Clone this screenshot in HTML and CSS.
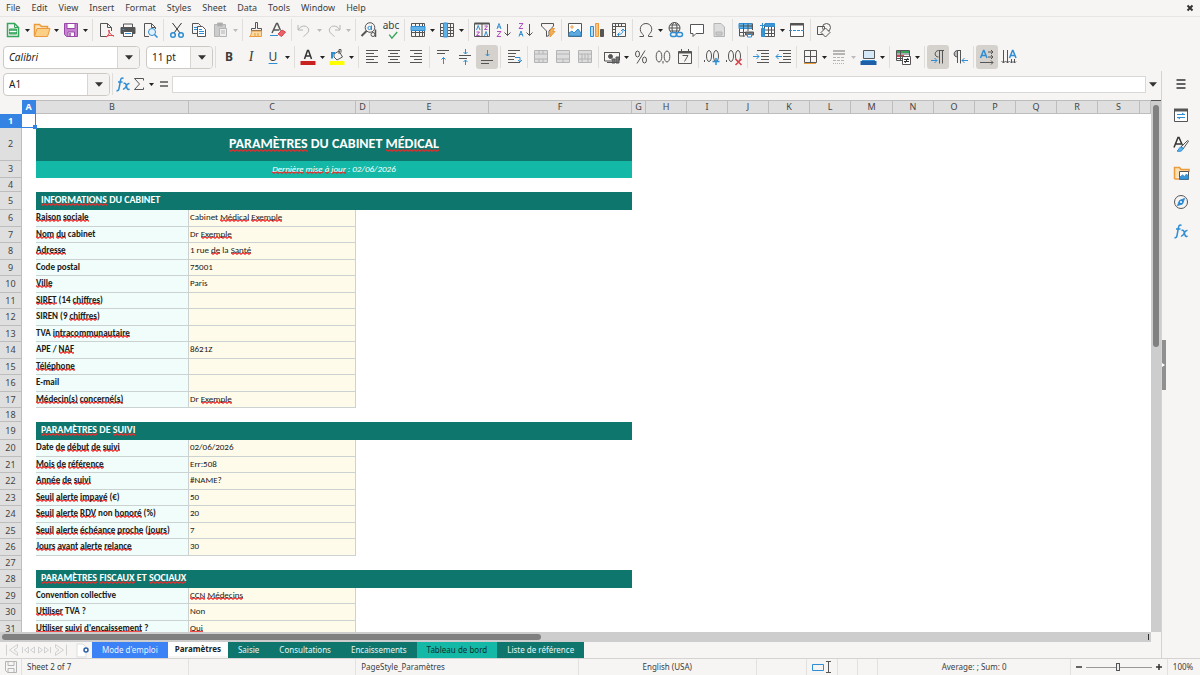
FILE: index.html
```html
<!DOCTYPE html>
<html lang="fr">
<head>
<meta charset="utf-8">
<meta name="viewport" content="width=device-width, initial-scale=1">
<title>Paramètres du cabinet médical</title>
<link rel="stylesheet" href="styles.css">
</head>
<body>
<svg class="defs" aria-hidden="true">
  <symbol id="arrow" viewBox="0 0 7 4"><path d="M0 0h7L3.500 4z" fill="currentColor"/></symbol>
  <symbol id="fx" viewBox="0 0 18 18"><path d="M9.500 3.500c-1.800-1-2.700 0-3 2L5 13.500c-.4 2-1.200 2.500-2.500 2M4 7h4.500M9.500 8.500c2-.8 2.300 0 3 3s1.200 3.500 3 2.500M15.500 8.500c-2-.5-2.500 1-3.500 3s-1.500 3-3 2.500" class="b w15"/></symbol>
</svg>

<nav class="menubar">
  <button>File</button><button>Edit</button><button>View</button><button>Insert</button><button>Format</button><button>Styles</button><button>Sheet</button><button>Data</button><button>Tools</button><button>Window</button><button>Help</button>
  <button class="close" aria-label="Close"><svg class="i s8" viewBox="0 0 8 8"><path d="M1.500 1.500l5 5m0-5l-5 5" class="k w2"/></svg></button>
</nav>

<div class="toolbar">
  <button aria-label="New"><svg class="i" viewBox="0 0 18 18"><path d="M3.500 2.500h7l4 4v9h-11z" class="g w15"/><path d="M10.500 2.500v4h4" class="g"/><path d="M5.500 8h7v5h-7z" fill="#5cb878" class="g"/><path d="M5.500 10.500h7" stroke="#fff"/></svg></button><button class="drop" aria-label="New options"><svg><use href="#arrow"/></svg></button>
  <button aria-label="Open"><svg class="i" viewBox="0 0 18 18"><path d="M1.500 15V3.500h5l2 2h6V8" class="o w15" fill="#fbe3bb"/><path d="M1.500 15.500L4 7.500h13l-2.500 8z" class="o" fill="#fbcf85"/></svg></button><button class="drop" aria-label="Open options"><svg><use href="#arrow"/></svg></button>
  <button aria-label="Save"><svg class="i" viewBox="0 0 18 18"><path d="M2.500 2.500h13v13h-11l-2-2z" stroke="#9a45a8" fill="#c684d0"/><path d="M5 2.500h8v5H5z" fill="#fff" stroke="#9a45a8"/><path d="M6 11h6.500v4.500H6z" fill="#fff" stroke="#9a45a8"/><path d="M8 12v3" stroke="#9a45a8" class="w15"/></svg></button><button class="drop" aria-label="Save options"><svg><use href="#arrow"/></svg></button>
  <i class="sep"></i>
  <button aria-label="Export as PDF"><svg class="i" viewBox="0 0 18 18"><path d="M9 15.500H3.500v-13h7l4 4V10M10.500 2.500v4h4"/><path d="M9 16c3-2 4-5 3-7-1.500 0 1 5 5 6-2-1-6-1-8 1z" class="r"/></svg></button>
  <button aria-label="Print"><svg class="i" viewBox="0 0 18 18"><path d="M4.500 6V3h9v3"/><path d="M2 6.500h14v6H2z" fill="#555"/><path d="M3.500 8.500h2" class="b"/><path d="M4.500 10.500h9v5h-9z" fill="#fff"/><path d="M6 12.500h6" class="b"/></svg></button>
  <button aria-label="Print preview"><svg class="i" viewBox="0 0 18 18"><path d="M8 15.500H3.500v-13h7l4 4V8M10.500 2.500v4h4"/><circle cx="11" cy="11" r="3.500" class="b" fill="#e2f1fb"/><path d="M13.500 13.500l3 3" class="b w15"/></svg></button>
  <i class="sep"></i>
  <button aria-label="Cut"><svg class="i" viewBox="0 0 18 18"><path d="M4.500 2l7.500 10M13.500 2L6 12" class="k"/><circle cx="5" cy="14" r="2.300" class="b w15"/><circle cx="13" cy="14" r="2.300" class="b w15"/></svg></button>
  <button aria-label="Copy"><svg class="i" viewBox="0 0 18 18"><path d="M7 12.500H2.500v-10h6l2 2V6"/><path d="M4 6.500h4M4 8.500h3" class="b"/><path d="M7.500 5.500h5l3 3v7h-8z" fill="#fff"/><path d="M9 8.500h3M9 10.500h5M9 12.500h5" class="b"/></svg></button>
  <button aria-label="Paste" disabled><svg class="i dim" viewBox="0 0 18 18"><path d="M7 15.500H2.500v-12h11V7" fill="#ccc"/><path d="M5.500 2h5v3h-5z" fill="#aaa"/><path d="M7.500 7.500h7v8h-7z" fill="#eee"/><path d="M9 10h4M9 12h4"/></svg></button><button class="drop" aria-label="Paste options" disabled><svg><use href="#arrow"/></svg></button>
  <i class="sep"></i>
  <button aria-label="Clone formatting"><svg class="i" viewBox="0 0 18 18"><path d="M8.500 1.500h2v6h4v2h-10v-2h4z"/><path d="M4.500 10h10v5.500h-12c1.500-1 2-3 2-5.500z" class="o" fill="#fbd9a0"/><path d="M8 12v3m3-3v3" class="o"/></svg></button>
  <button aria-label="Clear formatting"><svg class="i" viewBox="0 0 18 18"><path d="M3 12L7.500 2.500h1l3 7M5 9h5" class="w15"/><path d="M1 14.500h8" class="b"/><path d="M9 13l4-4 3.500 2-4 4.500z" class="r" fill="#e8636b"/></svg></button>
  <i class="sep"></i>
  <button aria-label="Undo" disabled><svg class="i dim" viewBox="0 0 18 18"><path d="M2 4v5h5M2.500 8.500C5 4 11 4 12.500 8c1 3-2 5-5 7.500"/></svg></button><button class="drop" aria-label="Undo options" disabled><svg><use href="#arrow"/></svg></button>
  <button aria-label="Redo" disabled><svg class="i dim" viewBox="0 0 18 18"><path d="M15 4v5h-5M14.500 8.500C12 4 6 4 4.500 8c-1 3 2 5 5 7.500"/></svg></button><button class="drop" aria-label="Redo options" disabled><svg><use href="#arrow"/></svg></button>
  <i class="sep"></i>
  <button aria-label="Find and replace"><svg class="i" viewBox="0 0 18 18"><circle cx="10" cy="6.500" r="4.800"/><path d="M6.500 10l-5 5" class="w2"/><circle cx="9.500" cy="7" r="1.600" class="b"/><path d="M11.500 4.500v4.500" class="b"/><circle cx="13" cy="13.500" r="2" fill="#f5f4f2"/><path d="M15.500 8.500V16" class="w15"/></svg></button>
  <button aria-label="Spelling" class="spell">abc<svg class="i" viewBox="0 0 18 18"><path d="M7 12l3 4 6-7" class="g w15"/></svg></button>
  <i class="sep"></i>
  <button aria-label="Row"><svg class="i" viewBox="0 0 18 18"><path d="M2.500 2.500h13v13h-13zM6.500 2v13M10.500 2v13M2 11.500h13M13.500 2v13"/><path d="M2 5.500h14v4H2z" class="b" fill="#5fb2e8"/></svg></button><button class="drop" aria-label="Row options"><svg><use href="#arrow"/></svg></button>
  <button aria-label="Column"><svg class="i" viewBox="0 0 18 18"><path d="M2.500 2.500h13v13h-13zM2 6.500h13M2 9.500h13M2 12.500h13M12.500 2v13"/><path d="M5.500 2h4v14h-4z" class="b" fill="#5fb2e8"/></svg></button><button class="drop" aria-label="Column options"><svg><use href="#arrow"/></svg></button>
  <i class="sep"></i>
  <button aria-label="Sort"><svg class="i" viewBox="0 0 18 18"><path d="M1.500 2.500h15v13h-15zM9 2v14"/><path d="M1.500 2.500h15" class="w2"/><path d="M3.500 9l1.700-4.500L7 9M11.500 15l1.500-4.500 1.700 4.500" class="b"/><path d="M3.500 11h3l-3 3.500h3M11.500 5h3l-3 3.500h3" class="p"/></svg></button>
  <button aria-label="Sort ascending"><svg class="i" viewBox="0 0 18 18"><path d="M2 8l2-5.500L6 8M2.500 6h3" class="b"/><path d="M2 10.500h4l-4 5h4" class="p"/><path d="M12.500 3v11.500M9.500 11.500l3 3 3-3"/></svg></button>
  <button aria-label="Sort descending"><svg class="i" viewBox="0 0 18 18"><path d="M2 15.500L4 10l2 5.500M2.500 13.500h3" class="b"/><path d="M2 2.500h4l-4 5h4" class="p"/><path d="M12.500 3v11.500M9.500 11.500l3 3 3-3"/></svg></button>
  <button aria-label="AutoFilter"><svg class="i" viewBox="0 0 18 18"><path d="M2.500 2.500h12V5L10 10v4.500l-2.500 1V10l-5-5z"/><path d="M12.500 7.500h3l-2 3h2.500l-5 5.500 1-4H10z" fill="#f4b05b" class="o"/></svg></button>
  <i class="sep"></i>
  <button aria-label="Insert image"><svg class="i" viewBox="0 0 18 18"><path d="M2.500 2.500h13v13h-13z" fill="#fff"/><circle cx="6" cy="6" r="1.200" class="o"/><path d="M3 15v-3l3-2 2 2 4-4 3 4v3z" class="b" fill="#5fa9dc"/></svg></button>
  <button aria-label="Insert chart"><svg class="i" viewBox="0 0 18 18"><path d="M2.500 5.500h3v10h-3z" class="b" fill="#b9dcf4"/><path d="M7.500 2.500h3v13h-3z" class="o" fill="#f8c37f"/><path d="M12.500 8.500h3v7h-3z" fill="#555"/></svg></button>
  <button aria-label="Insert pivot table"><svg class="i" viewBox="0 0 18 18"><path d="M2.500 2.500h13v13h-13zM2 5.500h14M5.500 2v14M8.500 3v2M11.500 3v2M3 8.500h2M3 11.500h2"/><path d="M8 13.500c4 0 5-2 5-5M11 10l2-2 2 2M9.500 11.500L7.500 13.500l2 2" class="b"/></svg></button>
  <i class="sep"></i>
  <button aria-label="Special character"><svg class="i" viewBox="0 0 18 18"><path d="M2.500 15.500h4V14C1 10 3 2.500 9 2.500s8 7.500 2.500 11.500v1.500h4"/></svg></button><button class="drop" aria-label="More special characters"><svg><use href="#arrow"/></svg></button>
  <button aria-label="Insert hyperlink"><svg class="i" viewBox="0 0 18 18"><circle cx="8.500" cy="7" r="5.500"/><ellipse cx="8.500" cy="7" rx="2.500" ry="5.500"/><path d="M3 7h11M4 4h9M4 10h9"/><rect x="4.500" y="11.500" width="6" height="4" rx="2" class="b w15" fill="#f5f4f2"/><rect x="10.500" y="11.500" width="6" height="4" rx="2" class="b w15"/></svg></button>
  <button aria-label="Insert comment"><svg class="i" viewBox="0 0 18 18"><path d="M2.500 3.500h13v9H8l-3 3v-3H2.500z" fill="#fff"/></svg></button>
  <button aria-label="Headers and footers" disabled><svg class="i dim" viewBox="0 0 18 18"><path d="M4 2.500h7l3.500 3.500v9.500H4z" fill="#ddd"/><path d="M6 11h6v3H6z" fill="#ccc"/></svg></button>
  <i class="sep"></i>
  <button aria-label="Print area"><svg class="i" viewBox="0 0 18 18"><path d="M2 2.500h13v5H2z" class="b" fill="#5fb2e8"/><path d="M2.500 5h13M2.500 8v7H8M2 11.500h7M6.500 2.500v13M11 2.500V10M15.500 2.500V9"/><path d="M8.500 11h8v3h-8z" fill="#777"/><path d="M10.500 13.500h4v2.500h-4z" class="b" fill="#fff"/></svg></button>
  <button aria-label="Freeze rows and columns"><svg class="i" viewBox="0 0 18 18"><path d="M5.500 3.500h10v12h-10zM9.500 5v10M12.500 5v10M6 9h10M6 12.500h10" fill="#fff"/><path d="M2.500 7.500h3v8h-3zM6 2.500h9.500v3H6z" class="b" fill="#3c95d4"/><path d="M1 4.500h5M3.500 2v5" class="b"/></svg></button><button class="drop" aria-label="Freeze options"><svg><use href="#arrow"/></svg></button>
  <button aria-label="Split window"><svg class="i" viewBox="0 0 18 18"><path d="M2.500 2.500h13v13h-13z" fill="#fff"/><path d="M2 3.500h14" class="w2"/><path d="M1 9.500h16" class="b" stroke-dasharray="3 1"/></svg></button>
  <i class="sep"></i>
  <button aria-label="Show draw functions"><svg class="i" viewBox="0 0 18 18"><path d="M2.500 5.500h7v8h-7z"/><circle cx="11.500" cy="6.500" r="4"/><path d="M10.500 7l4.500 4.500-4.500 4.500L6 11.500z" fill="#f5f4f2"/></svg></button>
</div>

<div class="toolbar">
  <div class="combo font"><input aria-label="Font name" value="Calibri"><button aria-label="Choose font"><svg><use href="#arrow"/></svg></button></div>
  <div class="combo size"><input aria-label="Font size" value="11 pt"><button aria-label="Choose size"><svg><use href="#arrow"/></svg></button></div>
  <i class="sep"></i>
  <button class="letter bold">B</button>
  <button class="letter ital">I</button>
  <button class="letter under">U</button><button class="drop" aria-label="Underline options"><svg><use href="#arrow"/></svg></button>
  <i class="sep"></i>
  <button aria-label="Font color"><svg class="i" viewBox="0 0 18 18"><path d="M5.500 11l3-8.500h1l3 8.500M6.500 8h5" class="k w15"/><path d="M1.500 15h15" stroke="#c9211e" stroke-width="4"/></svg></button><button class="drop" aria-label="Font color options"><svg><use href="#arrow"/></svg></button>
  <button aria-label="Background color"><svg class="i" viewBox="0 0 18 18"><path d="M6 6l5-3 3.500 6-5.500 3L6 9zM11 6V1.500h2v3"/><path d="M4 10.500V5h3" class="b w2"/><path d="M1.500 15h15" stroke="#ffff00" stroke-width="4"/></svg></button><button class="drop" aria-label="Background color options"><svg><use href="#arrow"/></svg></button>
  <i class="sep"></i>
  <button aria-label="Align left"><svg class="i" viewBox="0 0 18 18"><path d="M3 2.500h12M3 5.500h8M3 8.500h12M3 11.500h8M3 14.500h12"/></svg></button>
  <button aria-label="Center"><svg class="i" viewBox="0 0 18 18"><path d="M3 2.500h12M5 5.500h8M3 8.500h12M5 11.500h8M3 14.500h12"/></svg></button>
  <button aria-label="Align right"><svg class="i" viewBox="0 0 18 18"><path d="M3 2.500h12M7 5.500h8M3 8.500h12M7 11.500h8M3 14.500h12"/></svg></button>
  <i class="sep"></i>
  <button aria-label="Align top"><svg class="i" viewBox="0 0 18 18"><path d="M3 2.500h12M3 5.500h8"/><path d="M9.500 16V9.500M7.500 11.500l2-2 2 2" class="b"/></svg></button>
  <button aria-label="Center vertically"><svg class="i" viewBox="0 0 18 18"><path d="M3 7.500h12M3 10.500h8"/><path d="M9.500 1v5M7.500 4l2 2 2-2M9.500 17v-5M7.500 14l2-2 2 2" class="b"/></svg></button>
  <button aria-label="Align bottom" class="on"><svg class="i" viewBox="0 0 18 18"><path d="M3 12.500h12M3 15.500h8"/><path d="M9.500 2v6M7.500 6l2 2 2-2" class="b"/></svg></button>
  <i class="sep"></i>
  <button aria-label="Wrap text"><svg class="i" viewBox="0 0 18 18"><path d="M3 2.500h12M3 5.500h8M3 8.500h7M3 11.500h6M3 14.500h12"/><path d="M10 9.500h5V14M13 12l2 2 2-2" class="b"/></svg></button>
  <i class="sep"></i>
  <button aria-label="Merge and center" disabled><svg class="i dim" viewBox="0 0 18 18"><path d="M2.500 2.500h13v12h-13zM2 6h14M2 11h14M7 2v4M11 2v4M7 11v4M11 11v4" fill="#ddd"/></svg></button>
  <button aria-label="Merge cells" disabled><svg class="i dim" viewBox="0 0 18 18"><path d="M2.500 2.500h13v12h-13zM2 6h14M2 11h14M9 11v4" fill="#ddd"/></svg></button>
  <button aria-label="Unmerge cells" disabled><svg class="i dim" viewBox="0 0 18 18"><path d="M2.500 2.500h13v12h-13zM2 6h14M2 11h14M6 6v9M9 6v5M12 6v9" fill="#ddd"/></svg></button>
  <i class="sep"></i>
  <button aria-label="Currency"><svg class="i" viewBox="0 0 18 18"><path d="M1.500 4.500h15v8M1.500 4v9H8"/><circle cx="7.500" cy="8.500" r="2" fill="#555"/><path d="M9 11h3v4H9zM13 9h3v6h-3z" fill="#777"/><path d="M4 14.500h12"/></svg></button><button class="drop" aria-label="Currency options"><svg><use href="#arrow"/></svg></button>
  <button aria-label="Percent"><svg class="i" viewBox="0 0 18 18"><ellipse cx="5.500" cy="6" rx="2" ry="3"/><ellipse cx="12.500" cy="12" rx="2" ry="3"/><path d="M13 2.500L5 15.500"/></svg></button>
  <button aria-label="Number"><svg class="i" viewBox="0 0 18 18"><ellipse cx="5" cy="8.500" rx="2.800" ry="5.500"/><ellipse cx="13" cy="8.500" rx="2.800" ry="5.500"/><path d="M9 13v2.500"/></svg></button>
  <button aria-label="Date"><svg class="i" viewBox="0 0 18 18"><path d="M2.500 3.500h13v12h-13z"/><path d="M2.500 4.500h13" class="w2"/><path d="M5.500 1v3M12.500 1v3M6.500 7.500H12l-3.500 6"/></svg></button>
  <i class="sep"></i>
  <button aria-label="Add decimal place"><svg class="i" viewBox="0 0 18 18"><path d="M1.500 12v2"/><ellipse cx="6" cy="8" rx="2.500" ry="5.500"/><ellipse cx="13" cy="8" rx="2.500" ry="5.500"/><path d="M13 10v7M9.500 13.500h7" class="b w15"/></svg></button>
  <button aria-label="Delete decimal place"><svg class="i" viewBox="0 0 18 18"><path d="M1.500 12v2"/><ellipse cx="6" cy="8" rx="2.500" ry="5.500"/><ellipse cx="13" cy="8" rx="2.500" ry="5.500"/><path d="M10.500 11l6 6m0-6l-6 6" class="r w15"/></svg></button>
  <i class="sep"></i>
  <button aria-label="Increase indent"><svg class="i" viewBox="0 0 18 18"><path d="M5 2.500h12M9 5.500h8M9 8.500h8M9 11.500h8M5 14.500h12"/><path d="M1 8.500h6M4.500 6L7 8.500 4.500 11" class="b"/></svg></button>
  <button aria-label="Decrease indent"><svg class="i" viewBox="0 0 18 18"><path d="M5 2.500h12M9 5.500h8M9 8.500h8M9 11.500h8M5 14.500h12"/><path d="M2 8.500h6M4.500 6L2 8.500 4.500 11" class="b"/></svg></button>
  <i class="sep"></i>
  <button aria-label="Borders"><svg class="i" viewBox="0 0 18 18"><path d="M3.500 2.500h12v12h-12zM9.500 2v12M3 8.500h12"/><path d="M3 15.500h12" class="o"/></svg></button><button class="drop" aria-label="Border options"><svg><use href="#arrow"/></svg></button>
  <button aria-label="Border style" disabled><svg class="i dim" viewBox="0 0 18 18"><path d="M3 3h12M3 6h12" class="w2"/><path d="M3 9.500h12M3 12.500h12" stroke-dasharray="3 1"/><path d="M3 15.500h12" stroke-dasharray="1 1"/></svg></button><button class="drop" aria-label="Border style options" disabled><svg><use href="#arrow"/></svg></button>
  <button aria-label="Border color"><svg class="i" viewBox="0 0 18 18"><path d="M4.500 2.500h11v8h-11z" fill="#d5e8f7"/><path d="M3 12.500h13" class="b"/><path d="M1.500 15h16" stroke="#1f5fa8" stroke-width="4"/></svg></button><button class="drop" aria-label="Border color options"><svg><use href="#arrow"/></svg></button>
  <i class="sep"></i>
  <button aria-label="Conditional formatting"><svg class="i" viewBox="0 0 18 18"><path d="M2.500 2.500h13v10h-13z" fill="#fff"/><path d="M3 4h12" class="g w2"/><path d="M3 8h7" class="r w2"/><path d="M6.500 2v11M3 6h12M3 10.500h5"/><path d="M8.500 8.500h8v8h-8z" fill="#fff"/><path d="M10 11.500h5M10 13.500h5M14 10l-3 5" class="k"/></svg></button><button class="drop" aria-label="Conditional formatting options"><svg><use href="#arrow"/></svg></button>
  <i class="sep"></i>
  <button aria-label="Left-to-right" class="on"><svg class="i" viewBox="0 0 18 18"><path d="M15 2.500H9.500C5 3 5 9 9.500 9M10.500 2.500v13M13.500 2.500v13"/><path d="M2 12.500h6M5.500 10L8 12.500 5.500 15" class="b"/></svg></button>
  <button aria-label="Right-to-left"><svg class="i" viewBox="0 0 18 18"><path d="M10 2.500H6.500C2 3 2 9 6.500 9V2.500M6.500 9v6M9.500 2.500v13" fill="#bbb"/><path d="M11 12.500h6M13.500 10L11 12.500l2.500 2.500" class="b"/></svg></button>
  <i class="sep"></i>
  <button aria-label="Horizontal text" class="on"><svg class="i" viewBox="0 0 18 18"><path d="M2.500 10L5.500 2.500h.5L9 10M3.500 7.500h4.500" class="b w15"/><path d="M10 4h5M13 2l2 2-2 2M10 9h5M13 7l2 2-2 2M2 14.500h13M13 12.500l2 2-2 2"/></svg></button>
  <button aria-label="Vertical text"><svg class="i" viewBox="0 0 18 18"><path d="M9.500 10l3-7.500h.5l3 7.500M10.500 7.500h4.500" class="b w15"/><path d="M3.500 2v13M1.500 13l2 2 2-2M7.500 2v13M5.500 13l2 2 2-2M11.500 11v4M14.500 11v4M10 13.500l1.500 1.500 1.500-1.500 1.500 1.500 1.500-1.500"/></svg></button>
</div>

<div class="main">
  <main class="doc">
    <div class="formula">
      <div class="combo name"><input aria-label="Name box" value="A1"><button aria-label="Name list"><svg><use href="#arrow"/></svg></button></div>
      <i class="sep"></i>
      <button aria-label="Function wizard" class="slim"><svg class="i"><use href="#fx"/></svg></button>
      <button aria-label="Select function" class="slim"><svg class="i" viewBox="0 0 18 18"><path d="M13.500 5.500v-2h-9l5 5.500-5 5.500h9v-2"/></svg></button><button class="drop" aria-label="Function options"><svg><use href="#arrow"/></svg></button>
      <button aria-label="Formula" class="slim"><svg class="i" viewBox="0 0 18 18"><path d="M5 7h8M5 11h8" class="w15"/></svg></button>
      <input class="line" aria-label="Input line">
      <button class="expand" aria-label="Expand formula bar"><svg><use href="#arrow"/></svg></button>
    </div>

    <div class="view">
      <div class="sheet">
        <table>
          <colgroup><col class="c-row"><col class="c-gap"><col class="c-b"><col class="c-c"><col class="c-gap"><col class="c-e"><col class="c-f"><col class="c-gap"><col class="c-s"><col class="c-s"><col class="c-s"><col class="c-s"><col class="c-s"><col class="c-l"><col class="c-s"><col class="c-s"><col class="c-s"><col class="c-s"><col class="c-s"><col class="c-l"><col></colgroup>
          <thead><tr><td class="corner"></td><th class="sel">A</th><th>B</th><th>C</th><th>D</th><th>E</th><th>F</th><th>G</th><th>H</th><th>I</th><th>J</th><th>K</th><th>L</th><th>M</th><th>N</th><th>O</th><th>P</th><th>Q</th><th>R</th><th>S</th><th></th></tr></thead>
          <tbody>
            <tr class="blank"><th class="sel">1</th><td class="cursor"></td><td colspan="19"></td></tr>
            <tr class="title"><th>2</th><td></td><td colspan="5"><u>PARAMÈTRES</u> DU CABINET <u>MÉDICAL</u></td><td></td></tr>
            <tr class="sub"><th>3</th><td></td><td colspan="5"><u>Dernière</u> <u>mise</u> <u>à</u> <u>jour</u> : 02/06/2026</td><td></td></tr>
            <tr class="blank"><th>4</th><td colspan="20"></td></tr>
            <tr class="head"><th>5</th><td></td><td colspan="5"><u>INFORMATIONS</u> DU CABINET</td><td></td></tr>
            <tr class="row"><th>6</th><td></td><td><u>Raison</u> <u>sociale</u></td><td>Cabinet <u>Médical</u> <u>Exemple</u></td></tr>
            <tr class="row"><th>7</th><td></td><td><u>Nom</u> <u>du</u> cabinet</td><td>Dr <u>Exemple</u></td></tr>
            <tr class="row"><th>8</th><td></td><td><u>Adresse</u></td><td>1 rue <u>de</u> la <u>Santé</u></td></tr>
            <tr class="row"><th>9</th><td></td><td>Code postal</td><td>75001</td></tr>
            <tr class="row"><th>10</th><td></td><td><u>Ville</u></td><td>Paris</td></tr>
            <tr class="row"><th>11</th><td></td><td><u>SIRET</u> (14 <u>chiffres</u>)</td><td></td></tr>
            <tr class="row"><th>12</th><td></td><td>SIREN (9 <u>chiffres</u>)</td><td></td></tr>
            <tr class="row"><th>13</th><td></td><td>TVA <u>intracommunautaire</u></td><td></td></tr>
            <tr class="row"><th>14</th><td></td><td>APE / <u>NAF</u></td><td>8621Z</td></tr>
            <tr class="row"><th>15</th><td></td><td><u>Téléphone</u></td><td></td></tr>
            <tr class="row"><th>16</th><td></td><td>E-mail</td><td></td></tr>
            <tr class="row"><th>17</th><td></td><td><u>Médecin(s)</u> <u>concerné(s)</u></td><td>Dr <u>Exemple</u></td></tr>
            <tr class="blank"><th>18</th><td colspan="20"></td></tr>
            <tr class="head"><th>19</th><td></td><td colspan="5"><u>PARAMÈTRES</u> DE <u>SUIVI</u></td><td></td></tr>
            <tr class="row"><th>20</th><td></td><td>Date <u>de</u> <u>début</u> <u>de</u> <u>suivi</u></td><td>02/06/2026</td></tr>
            <tr class="row"><th>21</th><td></td><td><u>Mois</u> <u>de</u> <u>référence</u></td><td>Err:508</td></tr>
            <tr class="row"><th>22</th><td></td><td><u>Année</u> <u>de</u> <u>suivi</u></td><td>#NAME?</td></tr>
            <tr class="row"><th>23</th><td></td><td><u>Seuil</u> <u>alerte</u> <u>impayé</u> (€)</td><td>50</td></tr>
            <tr class="row"><th>24</th><td></td><td><u>Seuil</u> <u>alerte</u> <u>RDV</u> non <u>honoré</u> (%)</td><td>20</td></tr>
            <tr class="row"><th>25</th><td></td><td><u>Seuil</u> <u>alerte</u> <u>échéance</u> <u>proche</u> (<u>jours</u>)</td><td>7</td></tr>
            <tr class="row"><th>26</th><td></td><td><u>Jours</u> <u>avant</u> <u>alerte</u> <u>relance</u></td><td>30</td></tr>
            <tr class="blank"><th>27</th><td colspan="20"></td></tr>
            <tr class="head"><th>28</th><td></td><td colspan="5"><u>PARAMÈTRES</u> <u>FISCAUX</u> ET <u>SOCIAUX</u></td><td></td></tr>
            <tr class="row"><th>29</th><td></td><td>Convention collective</td><td><u>CCN</u> <u>Médecins</u></td></tr>
            <tr class="row"><th>30</th><td></td><td><u>Utiliser</u> TVA ?</td><td>Non</td></tr>
            <tr class="row"><th>31</th><td></td><td><u>Utiliser</u> <u>suivi</u> <u>d'encaissement</u> ?</td><td><u>Oui</u></td></tr>
          </tbody>
        </table>
      </div>
      <div class="vscroll"><div class="vthumb"></div></div>
      <div class="hscroll"><div class="hthumb"></div><i></i></div>
    </div>

    <div class="tabs">
      <div class="nav">
        <button aria-label="First sheet"><svg class="i" viewBox="0 0 15 14"><path d="M1.500 1.500v11M12.500 1.500L4.500 7l8 5.500v-3L9 7l3.500-2.500z"/></svg></button>
        <button aria-label="Previous sheet"><svg class="i" viewBox="0 0 15 14"><path d="M1.500 4v6M7.500 4L3.500 7l4 3zM13.500 4L9.500 7l4 3z"/></svg></button>
        <button aria-label="Next sheet"><svg class="i" viewBox="0 0 15 14"><path d="M13.500 4v6M1.500 4l4 3-4 3zM7.500 4l4 3-4 3z"/></svg></button>
        <button aria-label="Last sheet"><svg class="i" viewBox="0 0 15 14"><path d="M13.500 1.500v11M2.500 1.500l8 5.500-8 5.500v-3L6 7 2.500 4.500z"/></svg></button>
      </div>
      <button class="add" aria-label="Add sheet"><svg class="i" viewBox="0 0 16 15"><path d="M1 1h6l3 3v10H1z" fill="#fff" stroke="#ddd"/><circle cx="10" cy="7" r="2" fill="#fff" stroke="#2c5ea8" stroke-width="1.500"/></svg></button>
      <button class="tab blue">Mode d'emploi</button><button class="tab active">Paramètres</button><button class="tab">Saisie</button><button class="tab">Consultations</button><button class="tab">Encaissements</button><button class="tab teal">Tableau de bord</button><button class="tab">Liste de référence</button>
    </div>
  </main>

  <div class="split"><div class="grip"></div></div>
  <aside class="side">
    <button aria-label="Sidebar settings"><svg class="i" viewBox="0 0 18 18"><path d="M4.500 5h9M4.500 9h9M4.500 13h9" class="k w15"/></svg></button>
    <button aria-label="Properties"><svg class="i" viewBox="0 0 18 18"><path d="M2.500 3.500h13v12h-13z" fill="#fff"/><path d="M2 4h14" stroke-width="3"/><path d="M5 8.500h8M5 11.500h8M10 7l2 1.500M8 13l-2-1.500" class="b"/></svg></button>
    <button aria-label="Styles"><svg class="i" viewBox="0 0 18 18"><path d="M2 12.500L6 2.500h1l3.500 8M3.500 9H9" class="k w15"/><path d="M9 12l6-6c1-1 2 0 1 1l-5 7z" fill="#eee"/><path d="M5 16c3 1 6 0 6-3l-2-1c-2 0-2 3-4 4z" class="b" fill="#5fb2e8"/></svg></button>
    <button aria-label="Gallery"><svg class="i" viewBox="0 0 18 18"><path d="M2.500 15V3.500h5l1.500 2h8V8M2.500 15H7" class="o w15" fill="#fbe0b5"/><path d="M7.500 7.500h9v8h-9z" fill="#fff"/><path d="M8 15v-2l2.500-2 2 1.500 2-2.500 1.500 2v3z" class="b" fill="#3c95d4"/></svg></button>
    <button aria-label="Navigator"><svg class="i" viewBox="0 0 18 18"><circle cx="9" cy="9" r="6.500"/><path d="M12.500 5.500l-2 5.500-5 1.500 2-5z" class="b" fill="#2a86d1"/><circle cx="9" cy="9" r="1" fill="#fff" stroke="none"/></svg></button>
    <button aria-label="Functions"><svg class="i"><use href="#fx"/></svg></button>
  </aside>
</div>

<footer class="status">
  <div class="ico"><svg class="i dim s14" viewBox="0 0 14 14"><path d="M1.500 1.500h11v11h-9l-2-2zM4 1.500v4h6v-4M4 12V8.500h6V12"/></svg></div>
  <div class="st-a lead">Sheet 2 of 7</div>
  <div class="st-a"></div>
  <div class="st-b lead">PageStyle_Paramètres</div>
  <div class="st-c">English (USA)</div>
  <div class="st-d"></div>
  <div class="mode"><svg class="i" viewBox="0 0 22 14"><path d="M1.500 4.500h11v6h-11z" class="b"/><path d="M15 1.500h5M17.500 2v10M15 12.500h5"/></svg></div>
  <div class="st-e"></div><div class="st-e"></div>
  <div class="st-f">Average: ; Sum: 0</div>
  <div class="zoom"><button aria-label="Zoom out"><svg class="i s8" viewBox="0 0 8 8"><path d="M1 4h6" class="k w15"/></svg></button><input type="range" aria-label="Zoom" min="0" max="100" value="48"><button aria-label="Zoom in"><svg class="i s8" viewBox="0 0 8 8"><path d="M1 4h6M4 1v6" class="k w15"/></svg></button></div>
  <div class="pct">100%</div>
</footer>
</body>
</html>
```
FILE: styles.css
```css
* { box-sizing: border-box; }

body {
  margin: 0;
  height: 100vh;
  display: flex;
  flex-direction: column;
  overflow: hidden;
  background: #f6f5f4;
  color: #3d3d3d;
  font: 9px/14px "Noto Sans", sans-serif;
}

button, input { font: inherit; color: inherit; margin: 0; }
button { padding: 0; border: 0; background: none; display: flex; align-items: center; justify-content: center; }
.defs { position: absolute; width: 0; height: 0; }

/* icons */
.i { width: 18px; height: 18px; flex: none; fill: none; stroke: #555; stroke-width: 1; }
.i.s8 { width: 8px; height: 8px; }
.i.s14 { width: 14px; height: 14px; }
.i.dim { stroke: #b4b4b4; }
.b { stroke: #2f8dd3; }
.g { stroke: #35a65c; }
.o { stroke: #eb9a3c; }
.r { stroke: #dd4048; }
.p { stroke: #b04fc0; }
.k { stroke: #333; }
.w15 { stroke-width: 1.5; }
.w2 { stroke-width: 2; }

/* menu bar */
.menubar { height: 17px; flex: none; display: flex; padding: 0 6px; gap: 11px; border-bottom: 1px solid #e6e5e3; }
.menubar .close { margin-left: auto; }

/* toolbars */
.toolbar { height: 27px; flex: none; display: flex; align-items: center; padding: 0 0 1px 2px; }
.toolbar > button { width: 22px; height: 24px; flex: none; border-radius: 3px; }
.toolbar > .drop, .formula > .drop { width: 7px; flex: none; }
.drop svg { width: 5px; height: 3px; color: #222; flex: none; }
.drop:disabled svg { color: #bbb; }
.toolbar > .on { background: #d5d2ce; }
.sep { width: 5px; height: 22px; flex: none; background: linear-gradient(#e0dedb, #e0dedb) center / 1px 100% no-repeat; }
.drop + .sep { width: 6px; }
.letter { font-size: 12px; }
.bold { font-weight: 700; }
.ital { font-family: "Liberation Serif", serif; font-style: italic; font-size: 14px; }
.under { text-decoration: underline #2f8dd3; text-underline-offset: 2px; }
.toolbar > .spell { flex-direction: column; font-size: 10px; line-height: 10px; height: 20px; justify-content: flex-start; }
.spell .i { height: 16px; margin-top: -6px; }

.combo { display: flex; height: 23px; border: 1px solid #cdc9c5; border-radius: 4px; background: #fff; overflow: hidden; flex: none; }
.combo input { flex: 1; min-width: 0; border: 0; background: none; padding: 0 5px; color: #222; font-size: 10px; }
.combo button { width: 22px; border-left: 1px solid #d8d5d2; background: #f4f3f2; }
.combo svg, .expand svg { width: 8px; height: 5px; color: #333; }
.font { width: 137px; margin: 0 6px 0 1px; }
.font input { font-style: italic; }
.size { width: 67px; }
.name { width: 107px; }

/* body */
.main { flex: 1; min-height: 0; display: flex; }
.doc { flex: 1; min-width: 0; display: flex; flex-direction: column; }
.formula { height: 29px; flex: none; display: flex; align-items: center; padding: 0 0 3px 3px; }
.slim { width: 16px; flex: none; }
.formula .drop { margin: 0 1px; }
.line { flex: 1; min-width: 0; height: 17px; border: 1px solid #dad8d6; background: #fff; }
.expand { width: 15px; padding-right: 2px; }

.view { flex: 1; min-height: 0; display: grid; grid-template: minmax(0, 1fr) 10px / minmax(0, 1fr) 10px; }
.sheet { overflow: hidden; background: #fff; }
.vscroll { background: #cdcdcd; padding: 4px 2px 0; border-top: 1px solid #555; }
.vthumb { height: 46%; border-radius: 3px; background: #808080; }
.hscroll { background: #cdcdcd; padding: 2px; display: flex; justify-content: space-between; }
.hthumb { width: 47%; border-radius: 3px; background: #808080; }
.hscroll i { width: 1px; background: #333; }

/* spreadsheet */
table { width: 100%; table-layout: fixed; border-collapse: separate; border-spacing: 0; }
.c-row { width: 22px; }
.c-gap { width: 14px; }
.c-b { width: 153px; }
.c-c { width: 167px; }
.c-e { width: 119px; }
.c-f { width: 143px; }
.c-s { width: 41px; }
.c-l { width: 42px; }
th, td { padding: 0; line-height: 12px; white-space: nowrap; }
th { font-weight: 400; color: #444; background: #dfdfdf; border: solid #bdbdbd; border-width: 0 1px 1px 0; text-align: center; }
thead th { height: 14px; border-top: 1px solid #bdbdbd; }
tbody th { line-height: 8px; }
.corner { background: #f6f5f4; }
th.sel { background: #3584e4; border-color: #3584e4; color: #fff; font-weight: 700; }
.cursor { position: relative; border: solid #3584e4; border-width: 0 1px 1px 0; }
.cursor::after { content: ""; position: absolute; right: -2px; bottom: -2px; width: 4px; height: 4px; background: #3584e4; }
tbody td { font-family: Carlito, Lato, sans-serif; font-size: 9px; color: #1a1a1a; padding-bottom: 2px; }
.blank { height: 14px; }
.title { height: 33px; }
.sub { height: 17px; }
.head { height: 18px; }
.row { height: 16px; }
.row:nth-child(even) { height: 17px; }
.title td:nth-child(3) { background: #0f766e; color: #fff; font-size: 14px; line-height: 18px; font-weight: 700; text-align: center; }
.sub td:nth-child(3) { background: #14b8a6; color: #fff; font-style: italic; text-align: center; }
.head td:nth-child(3) { background: #0f766e; color: #fff; font-size: 10px; font-weight: 700; padding-left: 5px; }
.row td:nth-child(3), .row td:nth-child(4) { border: solid #cbd2d1; border-width: 0 1px 1px 0; }
.row td:nth-child(4) { padding-left: 1px; }
.row td:nth-child(3) { background: #f0fdfa; font-weight: 700; }
.row td:nth-child(4) { background: #fffbeb; }

/* spell-check mark */
u {
  text-decoration: none;
  background: url("data:image/svg+xml,%3Csvg xmlns='http://www.w3.org/2000/svg' width='4' height='3'%3E%3Cpath d='M-1 1.500L0 0.800L2 2.200L4 0.800L5 1.500' fill='none' stroke='%23f02828' stroke-width='1.200'/%3E%3C/svg%3E") left bottom / 4px 3px repeat-x;
}

/* sheet tabs */
.tabs { height: 16px; flex: none; display: flex; font-size: 8px; }
.nav { width: 76px; padding: 0 8px 0 5px; display: flex; }
.nav button { flex: 1; }
.nav .i { width: 15px; height: 14px; stroke: #d0d0d0; }
.add { width: 16px; }
.add .i { width: 16px; height: 15px; }
.tab { padding: 0 10px 1px; background: #0f766e; color: #e8f5f3; }
.tab.blue { background: #3b82f6; color: #eaf2ff; }
.tab.teal { background: #14b8a6; color: #10302c; }
.tab.active { background: #fff; color: #222; font-weight: 700; height: 14px; padding: 0 7px; }

/* sidebar */
.split { width: 5px; flex: none; border-left: 1px solid #d5d3d1; display: flex; align-items: center; }
.grip { width: 4px; height: 50px; background: #909090; display: flex; align-items: center; }
.grip::after { content: ""; border: solid transparent; border-width: 2px 0 2px 3px; border-left-color: #fff; }
.side { width: 34px; flex: none; display: flex; flex-direction: column; align-items: center; padding: 2px 4px 0 0; gap: 7px; }
.side button { width: 22px; height: 22px; flex: none; }
.side button:first-child { margin-bottom: 2px; }

/* status bar */
.status { height: 17px; flex: none; display: flex; align-items: stretch; border-top: 1px solid #d5d3d1; font-size: 8px; }
.status > div { min-width: 0; display: flex; align-items: center; justify-content: center; border-right: 1px solid #e3e1df; white-space: nowrap; }
.status .lead { justify-content: flex-start; text-indent: 5px; }
.status .ico { width: 22px; }
.st-a { flex: 168 0 0; }
.st-b { flex: 224 0 0; }
.st-c { flex: 179 0 0; }
.st-d { flex: 50 0 0; }
.status .mode { width: 31px; }
.mode .i { width: 22px; height: 14px; }
.st-e { width: 20px; }
.st-f { flex: 194 0 0; }
.status .zoom { width: 97px; gap: 3px; }
.zoom input { appearance: none; width: 66px; height: 12px; background: linear-gradient(#999, #999) center / 100% 1px no-repeat; }
.zoom input::-webkit-slider-thumb { appearance: none; width: 4px; height: 8px; border: 1px solid #555; background: #eee; }
.status .pct { width: 32px; padding-right: 2px; border: 0; }
```
